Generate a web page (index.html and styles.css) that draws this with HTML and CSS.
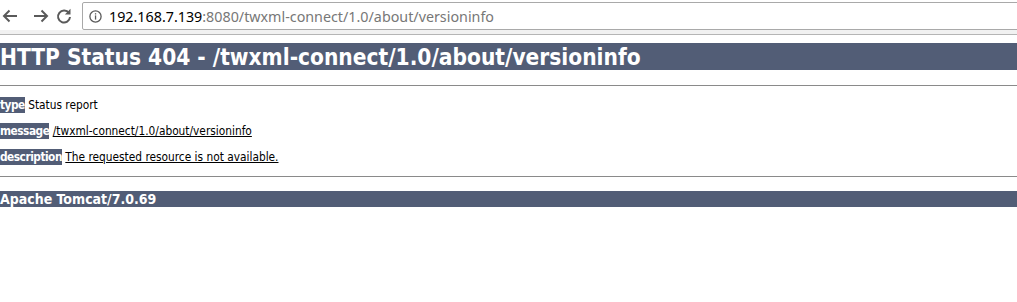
FILE: index.html
```html
<!DOCTYPE html>
<html lang="en">
  <head>
    <meta charset="UTF-8" />
    <title>Apache Tomcat/7.0.69 - Error report</title>
    <link rel="stylesheet" href="styles.css">
  </head>
  <body>
    <div class="toolbar">
      <div class="nav">
        <svg class="nav-icon" width="18" height="18" viewBox="0 0 18 18">
          <path d="M16 9H3M8.5 3.5L3 9l5.5 5.5" fill="none" stroke="#5a5a5a" stroke-width="2" />
        </svg>
        <svg class="nav-icon" width="18" height="18" viewBox="0 0 18 18">
          <path d="M2 9h13M9.5 3.5L15 9l-5.5 5.5" fill="none" stroke="#5a5a5a" stroke-width="2" />
        </svg>
        <svg class="nav-icon" width="18" height="18" viewBox="0 0 18 18">
          <path d="M14 6.2A6 6 0 1 0 15 10" fill="none" stroke="#5a5a5a" stroke-width="2" />
          <path d="M15.5 1.8v5.6H9.9z" fill="#5a5a5a" />
        </svg>
      </div>
      <div class="omnibox">
        <svg class="info-icon" width="13" height="13" viewBox="0 0 13 13">
          <circle cx="6.5" cy="6.5" r="5.6" fill="none" stroke="#5a5a5a" stroke-width="1.3" />
          <rect x="5.9" y="5.4" width="1.3" height="4.2" fill="#5a5a5a" />
          <rect x="5.9" y="3.2" width="1.3" height="1.3" fill="#5a5a5a" />
        </svg>
        <span class="host">192.168.7.139</span><span class="path">:8080/twxml-connect/1.0/about/versioninfo</span>
      </div>
    </div>
    <div class="toolbar-edge"></div>

    <div class="page">
      <h1>HTTP Status 404 - /twxml-connect/1.0/about/versioninfo</h1>
      <hr />
      <p><b>type</b> Status report</p>
      <p><b>message</b> <u>/twxml-connect/1.0/about/versioninfo</u></p>
      <p><b>description</b> <u>The requested resource is not available.</u></p>
      <hr />
      <h3>Apache Tomcat/7.0.69</h3>
    </div>
  </body>
</html>
```

FILE: styles.css
```css
body {
  margin: 0;
  padding: 0;
  background-color: white;
  overflow: hidden;
}

/* browser chrome */
.toolbar {
  display: flex;
  align-items: flex-start;
  height: 30px;
  background-color: #ffffff;
}

.nav {
  display: flex;
  align-items: center;
  gap: 13px;
  height: 28px;
  margin-top: 2px;
  padding-left: 1px;
}

.nav-icon {
  display: block;
}

.nav-icon:nth-child(3) {
  margin-left: -8px;
}

.omnibox {
  flex: 1;
  display: flex;
  align-items: center;
  height: 26px;
  margin-top: 2px;
  margin-left: 9px;
  margin-right: -10px;
  padding-left: 6px;
  border: 1px solid #a9a9a9;
  border-radius: 2px;
  font-family: "Noto Sans", sans-serif;
  font-size: 14.3px;
  white-space: nowrap;
}

.info-icon {
  margin-right: 7px;
}

.host {
  color: #000000;
}

.path {
  color: #777777;
}

.toolbar-edge {
  height: 4px;
  background-color: #f1f1f1;
  border-bottom: 1px solid #b5b5b5;
}

/* tomcat error page */
.page {
  padding-top: 8px;
  font-family: "DejaVu Sans Condensed", Tahoma, sans-serif;
}

h1 {
  margin: 0;
  height: 27px;
  line-height: 28px;
  font-size: 22.5px;
  font-weight: bold;
  color: white;
  background-color: #525d76;
}

hr {
  margin: 15px 0 0;
  height: 0;
  border: none;
  border-top: 1px solid #8a8a8a;
}

p {
  margin: 12px 0 0;
  font-size: 11.8px;
  line-height: 14px;
  color: black;
}

b {
  color: white;
  background-color: #525d76;
  font-weight: bold;
  letter-spacing: -0.5px;
  padding: 1px 0;
}

p + hr {
  margin-top: 12px;
}

h3 {
  margin: 14px 0 0;
  height: 16px;
  line-height: 17px;
  font-size: 14px;
  font-weight: bold;
  color: white;
  background-color: #525d76;
}
```
